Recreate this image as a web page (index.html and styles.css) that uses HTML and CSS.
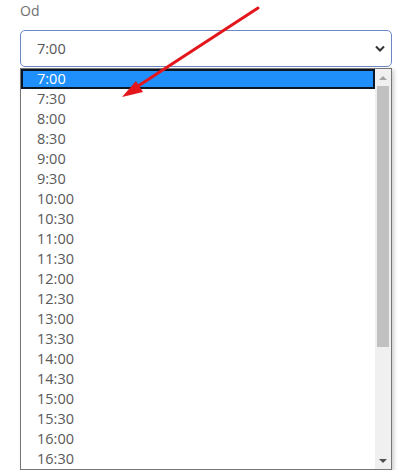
FILE: index.html
```html
<!DOCTYPE html>
<html lang="pl">
<head>
    <meta charset="UTF-8">
    <meta name="viewport" content="width=device-width, initial-scale=1.0">
    <title>Od</title>
    <link rel="stylesheet" href="styles.css">
</head>
<body>
    <div class="field">
        <div class="field-label">Od</div>
        <div class="select">
            <span>7:00</span>
            <svg class="chevron" width="10" height="7" viewBox="0 0 10 7">
                <path d="M1 1.5 L5 5.5 L9 1.5" fill="none" stroke="#333" stroke-width="2"/>
            </svg>
        </div>
        <div class="dropdown">
            <div class="options">
                <div class="option selected">7:00</div>
                <div class="option">7:30</div>
                <div class="option">8:00</div>
                <div class="option">8:30</div>
                <div class="option">9:00</div>
                <div class="option">9:30</div>
                <div class="option">10:00</div>
                <div class="option">10:30</div>
                <div class="option">11:00</div>
                <div class="option">11:30</div>
                <div class="option">12:00</div>
                <div class="option">12:30</div>
                <div class="option">13:00</div>
                <div class="option">13:30</div>
                <div class="option">14:00</div>
                <div class="option">14:30</div>
                <div class="option">15:00</div>
                <div class="option">15:30</div>
                <div class="option">16:00</div>
                <div class="option">16:30</div>
            </div>
            <div class="scrollbar">
                <div class="scroll-btn"><span class="tri-up"></span></div>
                <div class="track"><div class="thumb"></div></div>
                <div class="scroll-btn"><span class="tri-down"></span></div>
            </div>
        </div>
    </div>

    <svg class="pointer" width="401" height="476" viewBox="0 0 401 476">
        <line x1="258" y1="8" x2="132" y2="90" stroke="#e3161c" stroke-width="3" stroke-linecap="round"/>
        <polygon points="122,97 136,81 143,92" fill="#e3161c"/>
    </svg>
</body>
</html>
```

FILE: styles.css
```css
body {
    margin: 0;
    background: #fff;
    font-family: "Open Sans", Arial, sans-serif;
    color: #555;
}
.field {
    width: 372px;
    padding: 1px 0 0 20px;
}
.field-label {
    font-size: 14px;
    line-height: 20px;
    color: #707070;
    margin-bottom: 9px;
}
.select {
    height: 35px;
    border: 1px solid #6d86c4;
    border-radius: 5px;
    display: flex;
    align-items: center;
    justify-content: space-between;
    padding: 0 6px 0 16px;
    font-size: 14.5px;
    color: #555;
}
.dropdown {
    margin-top: 1px;
    height: 400px;
    border: 1px solid #767676;
    display: flex;
    box-shadow: 2px 2px 4px rgba(0, 0, 0, 0.2);
    background: #fff;
}
.options {
    flex: 1;
}
.option {
    height: 20px;
    line-height: 20px;
    padding-left: 16px;
    font-size: 14.5px;
    color: #595959;
}
.option.selected {
    background: #1e8ffb;
    color: #fff;
    border: 2px solid #0b1624;
    line-height: 16px;
    height: 16px;
    padding-left: 14px;
}
.scrollbar {
    width: 16px;
    background: #f0f0f0;
    display: flex;
    flex-direction: column;
}
.scroll-btn {
    height: 17px;
    display: flex;
    align-items: center;
    justify-content: center;
}
.tri-up {
    border-left: 4px solid transparent;
    border-right: 4px solid transparent;
    border-bottom: 4px solid #a3a3a3;
}
.tri-down {
    border-left: 4px solid transparent;
    border-right: 4px solid transparent;
    border-top: 4px solid #505050;
}
.track {
    flex: 1;
    padding: 0 2px;
}
.thumb {
    height: 261px;
    background: #c1c1c1;
}
.pointer {
    position: absolute;
    top: 0;
    left: 0;
}
```
